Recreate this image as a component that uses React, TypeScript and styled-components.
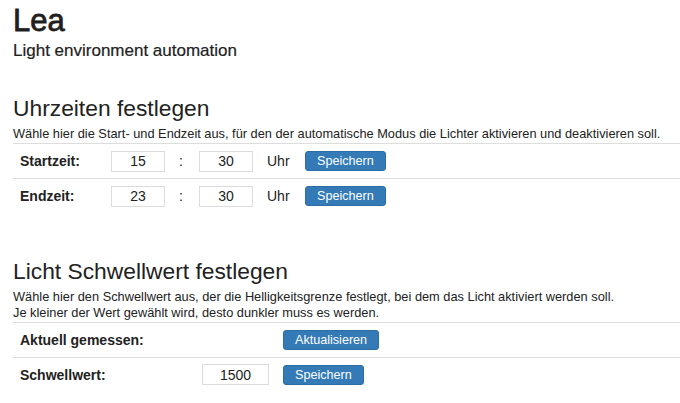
import React from 'react';
import styled, { createGlobalStyle } from 'styled-components';

const GlobalStyle = createGlobalStyle`
  html, body {
    margin: 0;
    padding: 0;
    background: #ffffff;
  }
  body {
    font-family: "Liberation Sans", Arial, sans-serif;
    color: #222222;
  }
`;

const Page = styled.div`
  padding: 4px 0 0 13px;
`;

const Title = styled.h1`
  margin: 0;
  font-size: 31px;
  font-weight: 400;
  line-height: 34px;
  color: #1f1f1f;
  -webkit-text-stroke: 0.8px #1f1f1f;
`;

const Subtitle = styled.div`
  margin-top: 3px;
  font-size: 17px;
  line-height: 20px;
  -webkit-text-stroke: 0.2px #222222;
`;

const Section = styled.section<{ $top: number }>`
  margin-top: ${p => p.$top}px;
`;

const SectionTitle = styled.h2`
  margin: 0;
  font-size: 22.8px;
  font-weight: 400;
  line-height: 26px;
`;

const Description = styled.p`
  margin: 5px 0 1px;
  font-size: 12.8px;
  line-height: 16px;
`;

const Table = styled.table`
  width: 100%;
  border-collapse: collapse;
  table-layout: fixed;
  font-size: 14px;
`;

const Row = styled.tr`
  border-top: 1px solid #dddddd;
  height: 35px;
`;

const Cell = styled.td<{ $w?: number }>`
  box-sizing: border-box;
  width: ${p => (p.$w ? `${p.$w}px` : 'auto')};
  padding: 0 7px;
  vertical-align: middle;
`;

const Label = styled(Cell)`
  font-weight: 700;
`;

const NumberInput = styled.input<{ $w: number }>`
  box-sizing: border-box;
  width: ${p => p.$w}px;
  height: 21px;
  border: 1px solid #dcdcdc;
  padding: 0;
  text-align: center;
  font-family: inherit;
  font-size: 14px;
  color: #222;
`;

const Button = styled.button`
  height: 20px;
  padding: 0 11px;
  border: 1px solid #2e6da4;
  border-radius: 3px;
  background: #337ab7;
  color: #ffffff;
  font-family: inherit;
  font-size: 12.6px;
  line-height: 18px;
`;

const TimeRow = ({ label, h, m }: { label: string; h: string; m: string }) => (
  <Row>
    <Label $w={91}>{label}</Label>
    <Cell $w={68}>
      <NumberInput $w={54} defaultValue={h} />
    </Cell>
    <Cell $w={20}>:</Cell>
    <Cell $w={68}>
      <NumberInput $w={54} defaultValue={m} />
    </Cell>
    <Cell $w={38}>Uhr</Cell>
    <Cell>
      <Button>Speichern</Button>
    </Cell>
  </Row>
);

export default function App() {
  return (
    <>
      <GlobalStyle />
      <Page>
        <Title>Lea</Title>
        <Subtitle>Light environment automation</Subtitle>

        <Section $top={34}>
          <SectionTitle>Uhrzeiten festlegen</SectionTitle>
          <Description>
            Wähle hier die Start- und Endzeit aus, für den der automatische Modus die Lichter aktivieren und deaktivieren soll.
          </Description>
          <Table>
            <tbody>
              <TimeRow label="Startzeit:" h="15" m="30" />
              <TimeRow label="Endzeit:" h="23" m="30" />
            </tbody>
          </Table>
        </Section>

        <Section $top={44}>
          <SectionTitle>Licht Schwellwert festlegen</SectionTitle>
          <Description>
            Wähle hier den Schwellwert aus, der die Helligkeitsgrenze festlegt, bei dem das Licht aktiviert werden soll.
            <br />
            Je kleiner der Wert gewählt wird, desto dunkler muss es werden.
          </Description>
          <Table>
            <tbody>
              <Row>
                <Label $w={182}>Aktuell gemessen:</Label>
                <Cell $w={81} />
                <Cell>
                  <Button>Aktualisieren</Button>
                </Cell>
              </Row>
              <Row>
                <Label $w={182}>Schwellwert:</Label>
                <Cell $w={81}>
                  <NumberInput $w={67} defaultValue="1500" />
                </Cell>
                <Cell>
                  <Button>Speichern</Button>
                </Cell>
              </Row>
            </tbody>
          </Table>
        </Section>
      </Page>
    </>
  );
}
